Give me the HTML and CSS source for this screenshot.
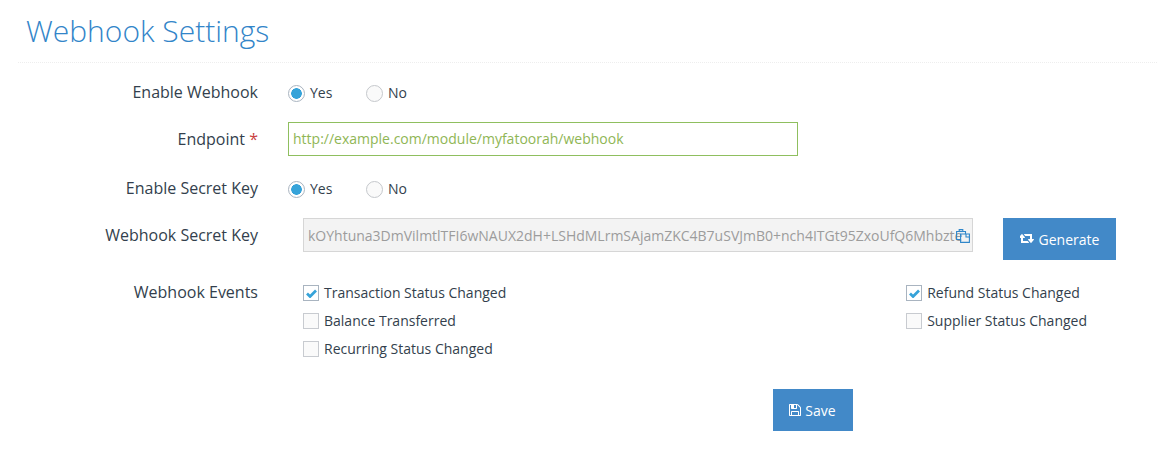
FILE: index.html
```html
<!DOCTYPE html>
<html lang="en">
<head>
    <meta charset="UTF-8">
    <meta name="viewport" content="width=device-width, initial-scale=1.0">
    <title>Webhook Settings</title>
    <link rel="stylesheet" href="styles.css">
</head>
<body>
    <div class="portlet">
        <div class="portlet-title">
            <h1>Webhook Settings</h1>
        </div>

        <div class="form-row row-radio">
            <label class="form-label">Enable Webhook</label>
            <div class="radio-list">
                <span class="radio-item"><span class="radio checked"></span>Yes</span>
                <span class="radio-item"><span class="radio"></span>No</span>
            </div>
        </div>

        <div class="form-row row-endpoint">
            <label class="form-label">Endpoint <span class="required">*</span></label>
            <input class="endpoint-input" type="text" value="http://example.com/module/myfatoorah/webhook">
        </div>

        <div class="form-row row-radio">
            <label class="form-label">Enable Secret Key</label>
            <div class="radio-list">
                <span class="radio-item"><span class="radio checked"></span>Yes</span>
                <span class="radio-item"><span class="radio"></span>No</span>
            </div>
        </div>

        <div class="form-row row-secret">
            <label class="form-label">Webhook Secret Key</label>
            <div class="secret-box">
                <input class="secret-input" type="text" disabled value="kOYhtuna3DmVilmtlTFI6wNAUX2dH+LSHdMLrmSAjamZKC4B7uSVJmB0+nch4ITGt95ZxoUfQ6Mhbzte">
                <svg class="copy-icon" viewBox="0 0 14 14" fill="none" stroke="#2f86c9" stroke-width="1.1">
                    <path d="M4 10.5H.6V2.5h2.6V.6h3.6v1.9h2.7v2.5"/>
                    <path d="M3.2 2.5h3.6"/>
                    <path d="M4.6 5h5.4l3.4 0v8.4H4.6z"/>
                    <path d="M10 5v3h3.4"/>
                </svg>
            </div>
            <button class="btn btn-generate" type="button">
                <svg class="retweet-icon" viewBox="0 0 1920 1792" fill="#fff">
                    <path d="M1152 1376q0 13-9.5 22.5t-22.5 9.5h-960q-8 0-13.5-2t-9-7-5.5-8-3-11.5-1-11.5v-600h-192q-26 0-45-19t-19-45q0-24 15-41l320-384q19-22 49-22t49 22l320 384q15 17 15 41 0 26-19 45t-45 19h-192v384h576q16 0 25 11l160 192q7 10 7 21zm640-416q0 24-15 41l-320 384q-20 23-49 23t-49-23l-320-384q-15-17-15-41 0-26 19-45t45-19h192v-384h-576q-16 0-25-12l-160-192q-7-9-7-20 0-13 9.5-22.5t22.5-9.5h960q8 0 13.5 2t9 7 5.5 8 3 11.5 1 11.5v600h192q26 0 45 19t19 45z"/>
                </svg>
                Generate
            </button>
        </div>

        <div class="form-row row-events">
            <label class="form-label">Webhook Events</label>
            <div class="events">
                <div class="events-col">
                    <span class="check-item"><span class="check checked"><svg viewBox="0 0 12 10"><path d="M1 5l3.4 3.4L11 1.6" fill="none" stroke="#36a3d9" stroke-width="3"/></svg></span>Transaction Status Changed</span>
                    <span class="check-item"><span class="check"></span>Balance Transferred</span>
                    <span class="check-item"><span class="check"></span>Recurring Status Changed</span>
                </div>
                <div class="events-col">
                    <span class="check-item"><span class="check checked"><svg viewBox="0 0 12 10"><path d="M1 5l3.4 3.4L11 1.6" fill="none" stroke="#36a3d9" stroke-width="3"/></svg></span>Refund Status Changed</span>
                    <span class="check-item"><span class="check"></span>Supplier Status Changed</span>
                </div>
            </div>
        </div>

        <div class="form-actions">
            <button class="btn btn-save" type="button">
                <svg class="save-icon" viewBox="0 0 1792 1792" fill="#fff">
                    <path d="M512 1536h768v-384h-768v384zm896 0h128v-896q0-14-10-38.5t-20-34.5l-281-281q-10-10-34-20t-39-10v416q0 40-28 68t-68 28h-576q-40 0-68-28t-28-68v-416h-128v1280h128v-416q0-40 28-68t68-28h832q40 0 68 28t28 68v416zm-384-928v-320q0-13-9.5-22.5t-22.5-9.5h-192q-13 0-22.5 9.5t-9.5 22.5v320q0 13 9.5 22.5t22.5 9.5h192q13 0 22.5-9.5t9.5-22.5zm640 32v928q0 40-28 68t-68 28h-1344q-40 0-68-28t-28-68v-1344q0-40 28-68t68-28h928q40 0 88 20t76 48l280 280q28 28 48 76t20 88z"/>
                </svg>
                Save
            </button>
        </div>
    </div>
</body>
</html>
```
FILE: styles.css
```css
* {
    box-sizing: border-box;
}

body {
    margin: 0;
    background: #fff;
    font-family: "Open Sans", sans-serif;
    font-size: 14px;
    color: #333f4d;
}

.portlet {
    padding: 0 0 0 18px;
    width: 1157px;
    height: 470px;
    overflow: hidden;
}

.portlet-title {
    width: 1141px;
    height: 63px;
    padding: 11px 0 0 8px;
    border-bottom: 1px dotted #eee;
}

.portlet-title h1 {
    margin: 0;
    font-size: 30px;
    font-weight: 300;
    line-height: 40px;
    color: #3285c9;
}

.form-row {
    display: flex;
}

.form-label {
    width: 240px;
    text-align: right;
    font-size: 16px;
    line-height: 20px;
    flex-shrink: 0;
}

.required {
    color: #c9413f;
}

.row-radio {
    height: 20px;
    align-items: center;
}

.row-radio .form-label {
    margin-bottom: 2px;
}

.portlet-title + .row-radio {
    margin-top: 20px;
}

.radio-list {
    display: flex;
    margin-left: 30px;
}

.radio-item {
    display: flex;
    align-items: center;
    width: 78px;
    line-height: 20px;
}

.radio {
    width: 17px;
    height: 17px;
    margin-right: 5px;
    border-radius: 50%;
    border: 1px solid #c5c8cc;
    background: #fafafa;
    flex-shrink: 0;
}

.radio.checked {
    border-color: #a9b4c0;
    background: radial-gradient(circle, #36a3d9 0, #36a3d9 5px, #fff 5.6px);
}

.row-endpoint {
    margin-top: 19px;
    height: 34px;
    align-items: center;
}

.endpoint-input {
    width: 510px;
    height: 34px;
    margin-left: 30px;
    padding: 0 4px 2px;
    border: 1px solid #8fbf5f;
    outline: none;
    font: 14px "Open Sans", sans-serif;
    color: #8fb655;
}

.row-radio + .row-secret {
    margin-top: 19px;
}

.row-endpoint + .row-radio {
    margin-top: 23px;
}

.row-secret {
    height: 42px;
    align-items: flex-start;
}

.row-secret .form-label {
    margin-top: 7px;
}

.secret-box {
    position: relative;
    width: 670px;
    height: 34px;
    margin-left: 45px;
}

.secret-input {
    width: 100%;
    height: 34px;
    padding: 0 4px;
    border: 1px solid #d6d6d6;
    background: #f3f3f3;
    font: 14px "Open Sans", sans-serif;
    color: #9c9c9c;
    outline: none;
}

.copy-icon {
    position: absolute;
    right: 3px;
    top: 11px;
    width: 14px;
    height: 14px;
}

.btn {
    display: flex;
    align-items: center;
    justify-content: center;
    border: 0;
    background: #4289c8;
    color: #fff;
    font: 14px "Open Sans", sans-serif;
    height: 42px;
}

.btn-generate {
    width: 113px;
    margin-left: 30px;
}

.retweet-icon {
    width: 15px;
    height: 14px;
    margin-right: 4px;
}

.row-events {
    margin-top: 23px;
}

.row-events .form-label {
    margin-top: -1px;
}

.events {
    display: flex;
    justify-content: space-between;
    width: 784px;
    margin-left: 45px;
}

.events-col {
    display: flex;
    flex-direction: column;
    gap: 8px;
}

.check-item {
    display: flex;
    align-items: center;
    height: 20px;
    line-height: 20px;
}

.check {
    display: flex;
    align-items: center;
    justify-content: center;
    width: 16px;
    height: 16px;
    margin-right: 5px;
    border: 1px solid #c8cbd0;
    background: #fafafa;
}

.check.checked {
    border-color: #a9b4c0;
    background: #fff;
}

.check svg {
    width: 11px;
    height: 9px;
}

.form-actions {
    display: flex;
    margin-top: 30px;
    margin-left: 755px;
}

.btn-save {
    width: 80px;
    padding: 0 8px 0 6px;
}

.save-icon {
    width: 14px;
    height: 14px;
    margin-right: 3px;
}
```
